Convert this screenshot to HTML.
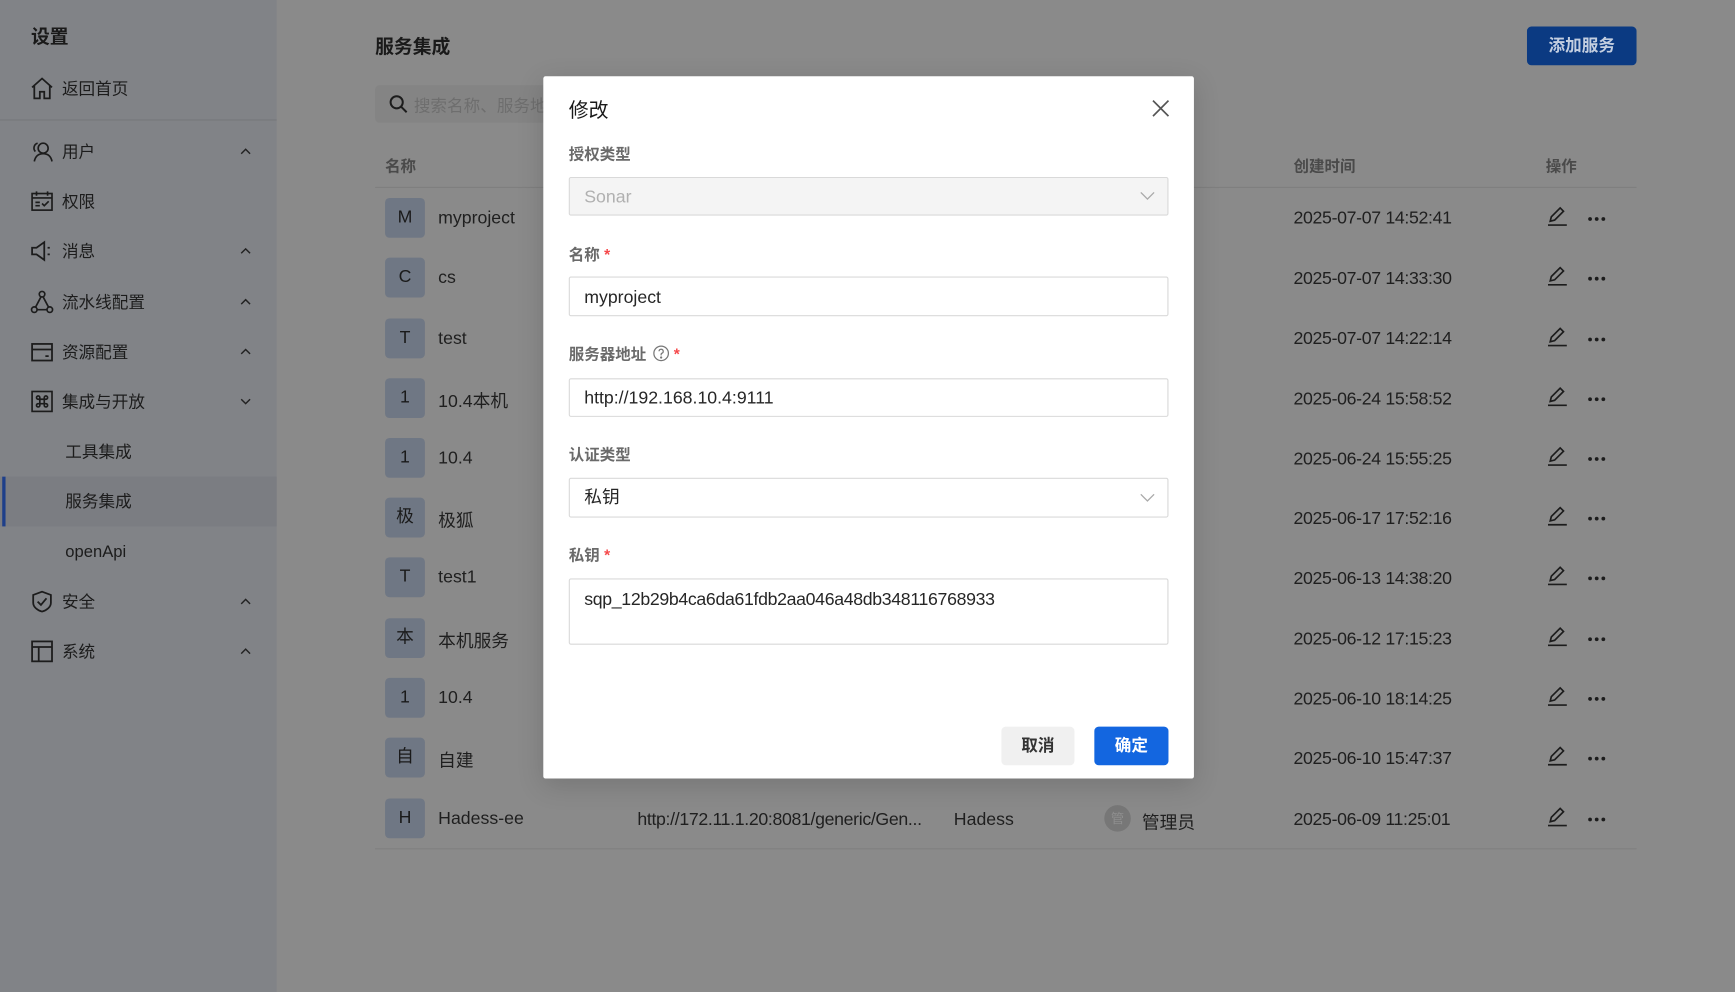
<!DOCTYPE html>
<html><head><meta charset="utf-8">
<style>
*{box-sizing:border-box;margin:0;padding:0}
body{width:1735px;height:992px;overflow:hidden;background:#8a8a8a;font-family:"Liberation Sans","Noto Sans CJK SC",sans-serif}
#s{position:absolute;left:0;top:0;width:1568px;height:897px;transform:scale(1.10651,1.10591);transform-origin:0 0;background:#8a8a8a}
.a{position:absolute;white-space:nowrap}
.side{position:absolute;left:0;top:0;width:250px;height:897px;background:#818387}
.mi{position:absolute;left:56px;font-size:15px;color:#1c1c1c;transform:translateY(-50%)}
.ic{position:absolute;left:27px;transform:translateY(-50%)}
.chev{position:absolute;left:215px;transform:translateY(-50%)}
.av{position:absolute;left:348px;width:36px;height:36px;background:#6f7784;border-radius:4px;font-size:16px;color:#1a1a1a;text-align:center;line-height:36px;transform:translateY(-50%)}
.nm{position:absolute;left:396px;font-size:16px;color:#1f1f1f;transform:translateY(-45%)}
.tm{position:absolute;left:1169px;font-size:16px;letter-spacing:-0.3px;color:#1f1f1f;transform:translateY(-45%)}
.ed{position:absolute;left:1397px;transform:translateY(-50%)}
.dt{position:absolute;left:1434px;transform:translateY(-50%)}
.lb{position:absolute;left:514px;font-size:14px;font-weight:bold;color:#6a6a6a;transform:translateY(-50%)}
.st{color:#f5484a;margin-left:4px}
.inp{position:absolute;left:514px;width:542px;border:1px solid #d9d9d9;border-radius:2px;background:#fff;font-size:16px;color:#262626;padding-left:13px}
</style></head><body><div id="s">
<div class="side">
<div class="a" style="left:28px;top:19px;font-size:17px;font-weight:bold;color:#1a1a1a">设置</div>
<svg class="ic" style="top:80px" width="22" height="22" viewBox="0 0 22 22" fill="none" stroke="#1c1c1c" stroke-width="1.6"><path d="M2 10L11 2l9 8M4 8.5V20h5v-6h4v6h5V8.5"/></svg>
<div class="mi" style="top:80px">返回首页</div>
<div class="a" style="left:0;top:108px;width:250px;height:1px;background:#76787c"></div>
<svg class="ic" style="top:137px" width="22" height="22" viewBox="0 0 22 22" fill="none" stroke="#1c1c1c" stroke-width="1.5"><circle cx="12" cy="8" r="4.5"/><path d="M4 20c1-5 4-7 8-7s7 2 8 7M7 3.5A4.5 4.5 0 0 0 5 11"/></svg>
<div class="mi" style="top:137px">用户</div>
<svg class="ic" style="top:182px" width="22" height="22" viewBox="0 0 22 22" fill="none" stroke="#1c1c1c" stroke-width="1.5"><rect x="2" y="4" width="18" height="15"/><path d="M6 2v4M16 2v4M2 8h18M5 12h4M5 15h4M11 13l2 2 4-4"/></svg>
<div class="mi" style="top:182px">权限</div>
<svg class="ic" style="top:227px" width="22" height="22" viewBox="0 0 22 22" fill="none" stroke="#1c1c1c" stroke-width="1.6"><path d="M2 8h4l7-5v16l-7-5H2zM16 8h2M16 14h2"/></svg>
<div class="mi" style="top:227px">消息</div>
<svg class="ic" style="top:273px" width="22" height="22" viewBox="0 0 22 22" fill="none" stroke="#1c1c1c" stroke-width="1.5"><circle cx="11" cy="4" r="2.5"/><circle cx="4" cy="18" r="2.5"/><circle cx="18" cy="18" r="2.5"/><path d="M10 6.5L5 16M12 6.5l5 9.5M6.5 18h9"/></svg>
<div class="mi" style="top:273px">流水线配置</div>
<svg class="ic" style="top:318px" width="22" height="22" viewBox="0 0 22 22" fill="none" stroke="#1c1c1c" stroke-width="1.6"><rect x="2" y="4" width="18" height="15"/><path d="M2 9h18M14 15h3"/></svg>
<div class="mi" style="top:318px">资源配置</div>
<svg class="ic" style="top:363px" width="22" height="22" viewBox="0 0 22 22" fill="none" stroke="#1c1c1c" stroke-width="1.5"><rect x="2" y="2" width="18" height="18"/><path d="M9 9h4v4H9zM9 9H7.5A1.5 1.5 0 1 1 9 7.5V9M13 9V7.5A1.5 1.5 0 1 1 14.5 9H13M13 13h1.5a1.5 1.5 0 1 1-1.5 1.5V13M9 13v1.5A1.5 1.5 0 1 1 7.5 13H9"/></svg>
<div class="mi" style="top:363px">集成与开放</div>
<div class="mi" style="top:408px;left:59px">工具集成</div>
<div class="a" style="left:0;top:431px;width:250px;height:45px;background:#7b7d82"></div>
<div class="a" style="left:2px;top:431px;width:3px;height:45px;background:#1e3f8a"></div>
<div class="mi" style="top:453px;left:59px">服务集成</div>
<div class="mi" style="top:499px;left:59px">openApi</div>
<svg class="ic" style="top:544px" width="22" height="22" viewBox="0 0 22 22" fill="none" stroke="#1c1c1c" stroke-width="1.6"><path d="M11 2l8 3v7c0 4-4 7-8 8-4-1-8-4-8-8V5z M7 11l3 3 5-6"/></svg>
<div class="mi" style="top:544px">安全</div>
<svg class="ic" style="top:589px" width="22" height="22" viewBox="0 0 22 22" fill="none" stroke="#1c1c1c" stroke-width="1.6"><rect x="2" y="2" width="18" height="18"/><path d="M2 7h18M8 7v13"/></svg>
<div class="mi" style="top:589px">系统</div>
<svg class="chev" style="top:137px" width="14" height="10" viewBox="0 0 14 10" fill="none" stroke="#222" stroke-width="1.3"><path d="M3 7l4-4 4 4"/></svg>
<svg class="chev" style="top:227px" width="14" height="10" viewBox="0 0 14 10" fill="none" stroke="#222" stroke-width="1.3"><path d="M3 7l4-4 4 4"/></svg>
<svg class="chev" style="top:273px" width="14" height="10" viewBox="0 0 14 10" fill="none" stroke="#222" stroke-width="1.3"><path d="M3 7l4-4 4 4"/></svg>
<svg class="chev" style="top:318px" width="14" height="10" viewBox="0 0 14 10" fill="none" stroke="#222" stroke-width="1.3"><path d="M3 7l4-4 4 4"/></svg>
<svg class="chev" style="top:363px" width="14" height="10" viewBox="0 0 14 10" fill="none" stroke="#222" stroke-width="1.3"><path d="M3 3l4 4 4-4"/></svg>
<svg class="chev" style="top:544px" width="14" height="10" viewBox="0 0 14 10" fill="none" stroke="#222" stroke-width="1.3"><path d="M3 7l4-4 4 4"/></svg>
<svg class="chev" style="top:589px" width="14" height="10" viewBox="0 0 14 10" fill="none" stroke="#222" stroke-width="1.3"><path d="M3 7l4-4 4 4"/></svg>
</div>

<div class="a" style="left:339px;top:28px;font-size:17px;font-weight:bold;color:#1a1a1a">服务集成</div>
<div class="a" style="left:1380px;top:24px;width:99px;height:35px;background:#0b3a82;border-radius:4px;color:#c3cee0;font-size:15px;font-weight:bold;text-align:center;line-height:35px">添加服务</div>
<div class="a" style="left:339px;top:77px;width:200px;height:34px;background:#848484;border-radius:4px"></div>
<svg class="a" style="left:351px;top:85px" width="18" height="18" viewBox="0 0 18 18" fill="none" stroke="#1c1c1c" stroke-width="1.8"><circle cx="7.5" cy="7.5" r="5.5"/><path d="M11.5 11.5l5 5"/></svg>
<div class="a" style="left:374px;top:85px;font-size:15px;color:#6e6e6e">搜索名称、服务地址</div>
<div class="a" style="left:348px;top:140px;font-size:14px;font-weight:bold;color:#4a4a4a">名称</div>
<div class="a" style="left:1169px;top:140px;font-size:14px;font-weight:bold;color:#4a4a4a">创建时间</div>
<div class="a" style="left:1397px;top:140px;font-size:14px;font-weight:bold;color:#4a4a4a">操作</div>
<div class="a" style="left:339px;top:169px;width:1140px;height:1px;background:#7f7f7f"></div>
<div class="a" style="left:339px;top:767px;width:1140px;height:1px;background:#7f7f7f"></div>

<div class="av" style="top:197px">M</div><div class="nm" style="top:197px">myproject</div><div class="tm" style="top:197px">2025-07-07 14:52:41</div>
<div class="av" style="top:251px">C</div><div class="nm" style="top:251px">cs</div><div class="tm" style="top:252px">2025-07-07 14:33:30</div>
<div class="av" style="top:306px">T</div><div class="nm" style="top:306px">test</div><div class="tm" style="top:306px">2025-07-07 14:22:14</div>
<div class="av" style="top:360px">1</div><div class="nm" style="top:360px">10.4本机</div><div class="tm" style="top:361px">2025-06-24 15:58:52</div>
<div class="av" style="top:414px">1</div><div class="nm" style="top:414px">10.4</div><div class="tm" style="top:415px">2025-06-24 15:55:25</div>
<div class="av" style="top:468px">极</div><div class="nm" style="top:468px">极狐</div><div class="tm" style="top:469px">2025-06-17 17:52:16</div>
<div class="av" style="top:522px">T</div><div class="nm" style="top:522px">test1</div><div class="tm" style="top:523px">2025-06-13 14:38:20</div>
<div class="av" style="top:577px">本</div><div class="nm" style="top:577px">本机服务</div><div class="tm" style="top:578px">2025-06-12 17:15:23</div>
<div class="av" style="top:631px">1</div><div class="nm" style="top:631px">10.4</div><div class="tm" style="top:632px">2025-06-10 18:14:25</div>
<div class="av" style="top:685px">自</div><div class="nm" style="top:685px">自建</div><div class="tm" style="top:686px">2025-06-10 15:47:37</div>
<div class="av" style="top:740px">H</div><div class="nm" style="top:740px">Hadess-ee</div><div class="tm" style="top:741px">2025-06-09 11:25:01</div>
<div class="nm" style="top:741px;left:576px;letter-spacing:-0.3px">http://172.11.1.20:8081/generic/Gen...</div>
<div class="nm" style="top:741px;left:862px">Hadess</div>
<div class="a" style="left:998px;top:728px;width:24px;height:24px;border-radius:50%;background:#777;color:#8e8e8e;font-size:12px;text-align:center;line-height:24px">管</div>
<div class="nm" style="top:741px;left:1032px">管理员</div>

<div id="ops"></div>

<div class="a" style="left:491px;top:69px;width:588px;height:635px;background:#fff;border-radius:2px;box-shadow:0 6px 24px rgba(0,0,0,0.15)"></div>
<div class="a" style="left:514px;top:86px;font-size:18px;color:#1a1a1a">修改</div>
<svg class="a" style="left:1041px;top:90px" width="16" height="16" viewBox="0 0 16 16" stroke="#555" stroke-width="1.5"><path d="M1 1l14 14M15 1L1 15"/></svg>
<div class="lb" style="top:139px">授权类型</div>
<div class="inp" style="top:160px;height:35px;line-height:35px;background:#f4f4f4;color:#b0b0b0">Sonar</div>
<div class="lb" style="top:230px">名称<span class="st">*</span></div>
<div class="inp" style="top:250px;height:36px;line-height:37px">myproject</div>
<div class="lb" style="top:320px">服务器地址 <svg width="15" height="15" viewBox="0 0 16 16" style="vertical-align:-2px;margin-left:2px" fill="none" stroke="#777" stroke-width="1.2"><circle cx="8" cy="8" r="7"/><path d="M6 6a2 2 0 1 1 2.5 2c-.4.2-.5.5-.5 1v1"/><circle cx="8" cy="12" r=".5" fill="#777"/></svg><span class="st">*</span></div>
<div class="inp" style="top:342px;height:35px;line-height:35px">http://192.168.10.4:9111</div>
<div class="lb" style="top:411px">认证类型</div>
<div class="inp" style="top:432px;height:36px;line-height:36px">私钥</div>
<svg class="a" style="left:1030px;top:172px" width="14" height="10" viewBox="0 0 14 10" fill="none" stroke="#aaa" stroke-width="1.2"><path d="M1 2l6 6 6-6"/></svg>
<svg class="a" style="left:1030px;top:445px" width="14" height="10" viewBox="0 0 14 10" fill="none" stroke="#aaa" stroke-width="1.2"><path d="M1 2l6 6 6-6"/></svg>
<div class="lb" style="top:502px">私钥<span class="st">*</span></div>
<div class="inp" style="top:523px;height:60px;padding-top:9px;line-height:20px;letter-spacing:-0.3px">sqp_12b29b4ca6da61fdb2aa046a48db348116768933</div>
<div class="a" style="left:905px;top:657px;width:66px;height:35px;background:#f0f0f0;border-radius:4px;font-size:15px;font-weight:bold;color:#333;text-align:center;line-height:36px">取消</div>
<div class="a" style="left:989px;top:657px;width:67px;height:35px;background:#1366e0;border-radius:4px;font-size:15px;font-weight:bold;color:#fff;text-align:center;line-height:36px">确定</div>
</div>
<script>
var ys=[197,251,306,360,414,468,522,577,631,685,740],h='';
ys.forEach(function(y){h+='<svg class="ed" style="top:'+(y-2)+'px" width="20" height="20" viewBox="0 0 20 20" fill="none" stroke="#1c1c1c" stroke-width="1.5"><path d="M4 15l1-4 8-8 3 3-8 8zM2 18.5h17"/></svg><svg class="dt" style="top:'+(y+1)+'px" width="18" height="6" viewBox="0 0 18 6" fill="#1c1c1c"><circle cx="3" cy="3" r="1.7"/><circle cx="9" cy="3" r="1.7"/><circle cx="15" cy="3" r="1.7"/></svg>';});
document.getElementById('ops').innerHTML=h;
</script>
</body></html>
